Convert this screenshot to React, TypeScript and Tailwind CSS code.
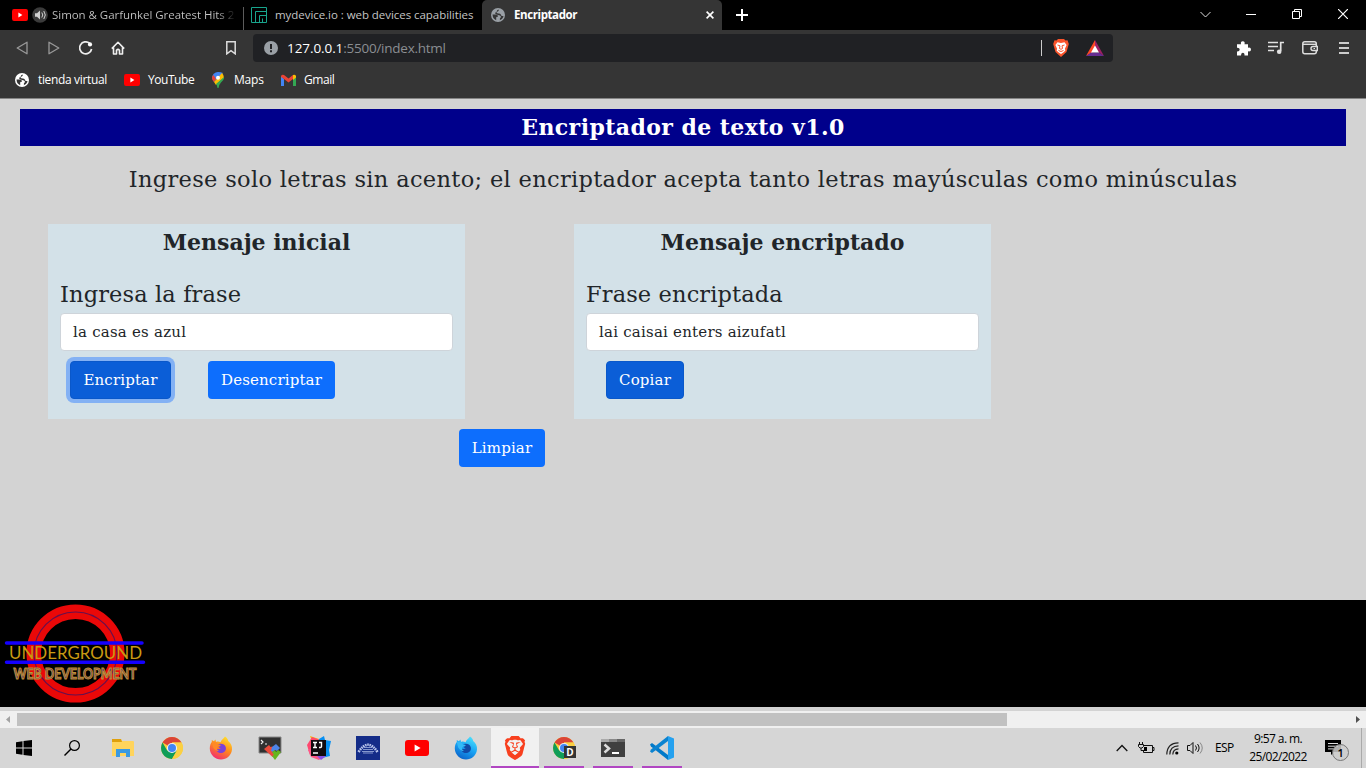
import React from "react";
import { SiBrave } from "react-icons/si";

const serif = "font-['DejaVu_Serif',serif]";

function Globe({ color, hole }: { color: string; hole: string }) {
  return (
    <svg width="14" height="14" viewBox="0 0 14 14" className="shrink-0">
      <circle cx="7" cy="7" r="7" fill={color} />
      <path d="M1.500 6.600h3.200q2.200 0 2.200 1.500v.7h-.8q-.9 0-.9.900v2.600Q1.800 11 1.500 6.600z" fill={hole} />
      <path d="M7.600 1.600q.6 1.500-.8 1.900-1.600.4-1.200 1.300.6.700 2.500.600 1.800.1 2 1.900.3 1 1.700.6.700-.1.700.8Q11.300 11.600 8.600 12.300q1-1.500.2-2.100l1-.6q.5-2.200-1.800-2.300L5.400 6.600Q3.600 5.600 4.400 4.400q1.800-.4 1.600-1.600.1-1 1.600-1.200z" fill={hole} />
    </svg>
  );
}

function YouTube({ w, h }: { w: number; h: number }) {
  return (
    <svg width={w} height={h} viewBox="0 0 24 16" preserveAspectRatio="none" className="shrink-0">
      <rect width="24" height="16" rx="3" fill="#f00" />
      <path d="M9.600 4.600v6.800l6-3.400z" fill="#fff" />
    </svg>
  );
}

function Chrome() {
  return (
    <svg width="22" height="22" viewBox="0 0 22 22">
      <circle cx="11" cy="11" r="11" fill="#f9cf3b" />
      <path d="M11 11 1.500 5.500A11 11 0 0 1 20.500 5.500H11z" fill="#db4437" />
      <path d="M1.500 5.500A11 11 0 0 0 11 22l4.800-8.300L11 11 6.300 13.800z" fill="#0f9d58" />
      <path d="M20.500 5.500H11L15.800 13.700 11 22A11 11 0 0 0 20.500 5.500z" fill="#fbd043" />
      <circle cx="11" cy="11" r="5.100" fill="#f1f1f1" />
      <circle cx="11" cy="11" r="4" fill="#4285f4" />
    </svg>
  );
}

function Firefox({ blue = false }: { blue?: boolean }) {
  const id = blue ? "fxblue" : "fxwarm";
  return (
    <svg width="24" height="24" viewBox="0 0 24 24">
      <defs>
        <linearGradient id={id} x1="0.8" y1="0" x2="0.3" y2="1">
          <stop offset="0" stopColor={blue ? "#4fe3fb" : "#ffe52e"} />
          <stop offset="0.5" stopColor={blue ? "#1aa5f5" : "#ff8a1c"} />
          <stop offset="1" stopColor={blue ? "#0a62c9" : "#f22a72"} />
        </linearGradient>
      </defs>
      <path d="M16 .5c2 1.200 3 3 3.200 4.600 2.600 2 4.200 5 3.800 8.400C22.400 19.500 17.700 23.500 12 23.500S1 19 .8 12.800c-.1-3 .8-5.200 2-6.800V4l2 1.300L6.500 3.500 7 6c1.500-.6 3-.5 4.500.2C12.500 3.500 14.500 3 16 .5z" fill={`url(#${id})`} />
      <path d="M8 9.500c2-2.600 7.500-2.200 8.700 1.500 1 3.500-1.500 6-4.700 6-3 0-5-2-4.700-4.800 1.500 1.200 3.400 1 4.500.1-1.500-.2-2.500-1.800-3.800-2.800z" fill={blue ? "#124aa6" : "#7c42d8"} />
      <path d="M2.800 6c3-1 5.200.3 6 2.300l3 .8c-.5 1.600-2.400 1.500-3.500 2.200-.8 2 .3 3.400 2 3.700-4 .2-6-2.600-6.500-5z" fill={blue ? "#33b9f7" : "#ff8a25"} />
    </svg>
  );
}

function Underground() {
  return (
    <svg width="150" height="107" viewBox="0 0 150 107">
      <circle cx="75.500" cy="53.500" r="41.800" fill="none" stroke="#ea0808" strokeWidth="14.500" />
      <circle cx="75.500" cy="53.500" r="41.500" fill="none" stroke="#641050" strokeWidth="1.200" />
      <path d="M6.500 43H142M6.500 62.300H143.500" stroke="#1400ff" strokeWidth="3.500" strokeLinecap="round" />
      <text x="9" y="59" textLength="133" lengthAdjust="spacingAndGlyphs" fontFamily="Lato, sans-serif" fontSize="17" fill="#c99a12">UNDERGROUND</text>
      <text x="13.500" y="78.500" textLength="123" lengthAdjust="spacingAndGlyphs" fontFamily="Lato, sans-serif" fontSize="14.500" fontWeight="700" fill="#68406a" stroke="#c39432" strokeWidth="1">WEB DEVELOPMENT</text>
    </svg>
  );
}

function Tabs() {
  return (
    <div className="flex h-[30px] bg-black text-[11.500px] text-[#c4c4c4]">
      <div className="flex w-[243px] items-center pl-3">
        <YouTube w={16} h={12} />
        <svg width="16" height="16" viewBox="0 0 16 16" className="ml-1 shrink-0">
          <circle cx="8" cy="8" r="7.800" fill="#3b3b3b" />
          <path d="M3 6.200h2L8 3.500v9L5 9.800H3z" fill="#d0d0d0" />
          <path d="M9.800 5.500q2 2.500 0 5M11.800 4q3 4 0 8" fill="none" stroke="#d0d0d0" />
        </svg>
        <span className="ml-1 w-[188px] whitespace-nowrap bg-gradient-to-r from-[#c4c4c4] from-88% to-black bg-clip-text text-transparent tracking-[-0.040px]">Simon &amp; Garfunkel Greatest Hits 2</span>
      </div>
      <div className="mt-[7px] w-px bg-[#5c5c5c]" />
      <div className="flex w-[238px] items-center pl-[7px]">
        <svg width="16" height="16" viewBox="0 0 16 16" className="shrink-0" fill="none" stroke="#18a58d">
          <path d="M.5.500h15v15H.5zM4.500 15.500v-11h11M8.500 15.500v-7h7M11.500 15.500v-4" />
        </svg>
        <span className="ml-2 whitespace-nowrap tracking-[-0.050px]">mydevice.io : web devices capabilities</span>
      </div>
      <div className="flex w-[240px] items-center rounded-t-[5px] bg-[#353535] pl-[9px] pr-2 text-white">
        <Globe color="#9aa0a6" hole="#353535" />
        <span className="ml-[9px] flex-1 font-bold tracking-[-0.400px]">Encriptador</span>
        <svg width="8" height="8" viewBox="0 0 8 8"><path d="m.6.600 6.800 6.800M7.400.600.600 7.400" stroke="#fff" strokeWidth="1.600" /></svg>
      </div>
      <div className="flex flex-1 items-center pl-[14px]">
        <svg width="12" height="12" viewBox="0 0 12 12"><path d="M6 0v12M0 6h12" stroke="#fff" strokeWidth="2" /></svg>
      </div>
      <div className="flex w-[184px] shrink-0 pb-[2px]">
        <div className="flex w-[46px] items-center justify-center"><svg width="11" height="11" viewBox="0 0 11 11"><path d="m.5 3 5 5 5-5" fill="none" stroke="#ddd" /></svg></div>
        <div className="flex w-[46px] items-center justify-center"><svg width="10" height="10" viewBox="0 0 10 10"><path d="M0 5.500h10" stroke="#fff" /></svg></div>
        <div className="flex w-[46px] items-center justify-center"><svg width="10" height="10" viewBox="0 0 10 10"><path d="M.5 2.500h7v7h-7zM2.500 2.500v-2h7v7h-2" fill="none" stroke="#fff" /></svg></div>
        <div className="flex w-[46px] items-center justify-center"><svg width="10" height="10" viewBox="0 0 10 10"><path d="m0 0 10 10M10 0 0 10" stroke="#fff" strokeWidth="1.200" /></svg></div>
      </div>
    </div>
  );
}

function Toolbar() {
  return (
    <div className="flex h-9 items-center bg-[#353535] pl-4">
      <svg width="12" height="14" viewBox="0 0 12 14"><path d="M11 1.200v11.600L1.200 7z" fill="none" stroke="#999" strokeWidth="1.300" strokeLinejoin="round" /></svg>
      <svg width="12" height="14" viewBox="0 0 12 14" className="ml-5"><path d="M1 1.200v11.600L10.800 7z" fill="none" stroke="#999" strokeWidth="1.300" strokeLinejoin="round" /></svg>
      <svg width="14" height="14" viewBox="0 0 14 14" className="ml-[19px]"><path d="M12.600 8A6 6 0 1 1 10.500 2.200" fill="none" stroke="#eee" strokeWidth="1.700" /><circle cx="11" cy="3.400" r="2.100" fill="#fff" /></svg>
      <svg width="14" height="14" viewBox="0 0 14 14" className="ml-[18px]"><path d="M.8 7.600 7 1.300l6.200 6.300M2.500 6.500V13H5.500V9.200q1.500-1.700 3 0V13h3V6.500" fill="none" stroke="#eee" strokeWidth="1.600" strokeLinejoin="round" /></svg>
      <svg width="10" height="14" viewBox="0 0 10 14" className="ml-[101px]"><path d="M.8.800h8.400v12L5 9.600.8 12.800z" fill="none" stroke="#ddd" strokeWidth="1.500" /></svg>
      <div className="ml-[17px] flex h-7 w-[860px] items-center rounded bg-[#202124] pl-[11px] pr-[9px]">
        <svg width="14" height="14" viewBox="0 0 14 14"><circle cx="7" cy="7" r="7" fill="#9aa0a6" /><path d="M7 3v5M7 9.300v1.900" stroke="#202124" strokeWidth="2" /></svg>
        <span className="ml-[9px] flex-1 text-[13.500px] tracking-[-0.250px] text-[#8b8e92]"><span className="tracking-[-0.080px] text-white">127.0.0.1</span>:5500/index.html</span>
        <div className="h-4 w-px bg-[#ccc]" />
        <svg width="16" height="18" viewBox="0 0 16 18" className="ml-[11px]">
          <path d="M5 0h6l1.500 1.500 2-.2L15.800 5 13.500 13 8 18 2.500 13 .2 5 1.500 1.300l2 .2z" fill="#fb542b" />
          <path d="M4.500 3.300 8 4l3.500-.7L13.600 6l-1.700 3.700 .5 1.700-1.500 1.500L8 15l-2.900-2.100-1.500-1.500.5-1.700L2.400 6z" fill="#fff" />
          <path d="m4.500 6 2.500.8L6.500 9.500 8 10.300l1.500-.8L9 6.800l2.500-.8M5.500 11.500 8 12.500l2.500-1" fill="none" stroke="#fb542b" strokeWidth="1" />
        </svg>
        <svg width="18" height="16" viewBox="0 0 18 16" className="ml-[17px]"><path d="M9 0 0 16 9 11z" fill="#ff4724" /><path d="m9 0 9 16-9-6z" fill="#9e1f63" /><path d="M0 16h18l-5-3.600H5z" fill="#662d91" /><path d="m9 5.500 4 7H5z" fill="#fff" /></svg>
      </div>
      <svg width="15" height="15" viewBox="0 0 15 15" className="ml-[123px]"><path d="M1 3.200h4q-.7-3 1.800-3t1.700 3h3.500v3.500q3-.6 3 1.800t-3 1.800V14.500H8.500q.2-2.700-1.700-2.700T5 14.500H1V10.500q2.700.1 2.700-1.900T1 6.800z" fill="#fff" /></svg>
      <svg width="16" height="14" viewBox="0 0 16 14" className="ml-[17px]"><path d="M0 1.500h10M0 5.500h10M0 9.500h6M12.700 10V1.500H16" fill="none" stroke="#e2e2e2" strokeWidth="1.700" /><circle cx="11.200" cy="10.800" r="2.300" fill="#e2e2e2" /></svg>
      <svg width="16" height="14" viewBox="0 0 16 14" className="ml-[18px]"><rect x=".8" y=".8" width="13.500" height="12" rx="2" fill="none" stroke="#ddd" strokeWidth="1.500" /><path d="M1 3.300h13.500" stroke="#ddd" strokeWidth="1.400" /><path d="M15.300 5.500H11q-2 0-2 2t2 2h4.300z" fill="#353535" stroke="#ddd" strokeWidth="1.400" /><path d="M11.500 7.500h1.500" stroke="#ddd" /></svg>
      <svg width="10" height="12" viewBox="0 0 10 12" className="ml-[21px]"><path d="M0 1h10M0 6h10M0 11h10" stroke="#ccc" strokeWidth="1.800" /></svg>
    </div>
  );
}

function Bookmarks() {
  return (
    <div className="flex h-8 items-center bg-[#353535] pl-[15px] pb-1 text-[12px] text-white">
      <Globe color="#fff" hole="#353535" />
      <span className="ml-[9px] w-[86px] whitespace-nowrap tracking-[-0.350px]">tienda virtual</span>
      <YouTube w={16} h={12} />
      <span className="ml-2 w-[64px] tracking-[-0.450px]">YouTube</span>
      <svg width="12" height="16" viewBox="0 0 12 16">
        <path d="M6 0A6 6 0 0 0 0 6l2 4 9-9Q9 0 6 0z" fill="#4285f4" /><path d="M0 6q0 2 2 4l2-3-2.500-4Q0 4 0 6z" fill="#ea4335" /><path d="M2 10 10 1q2 2 2 5L7 10 4 13z" fill="#fbbc04" /><path d="M12 5q.3 3-3 5.500-2 2-2.500 5.500h-1Q5 13 4 12z" fill="#34a853" /><circle cx="6" cy="5.700" r="2" fill="#fff" />
      </svg>
      <span className="ml-[10px] w-[47px] tracking-[-0.200px]">Maps</span>
      <svg width="15" height="12" viewBox="0 0 15 12"><path d="M0 2v10h3V5z" fill="#4285f4" /><path d="M15 2v10h-3V5z" fill="#34a853" /><path d="M0 2Q1 0 3 1l4.500 3.500L12 1v4L7.500 8.500 3 5 0 3z" fill="#ea4335" /><path d="M12 1q2-1 3 1v1.500L12 6z" fill="#fbbc04" /></svg>
      <span className="ml-2 tracking-[-0.450px]">Gmail</span>
    </div>
  );
}

function Card({ title, label, value, children }: { title: string; label: string; value: string; children: React.ReactNode }) {
  return (
    <section className="h-[195px] w-[417px] shrink-0 bg-[#d3e1e8] px-3 text-[#212529]">
      <h2 className="h-[37px] text-center text-[22px] leading-[36px] font-bold whitespace-nowrap">{title}</h2>
      <p className="mt-[15px] h-[37px] text-[22.500px] leading-9 tracking-[0.130px] whitespace-nowrap">{label}</p>
      <div className="flex h-[38px] items-center rounded border border-[#ced4da] bg-white px-3 text-[15px] tracking-[0.220px]">{value}</div>
      <div className="flex pt-[10px]">{children}</div>
    </section>
  );
}

const btn = "flex h-[38px] items-center justify-center rounded text-[15px] tracking-[0.150px] text-white";

function Page() {
  return (
    <main className={`h-[502px] border-t border-[#858585] bg-[#d3d3d3] pt-[10px] ${serif}`}>
      <h1 className="mx-5 h-[37px] bg-[#00008b] text-center text-[22px] leading-[36px] font-bold tracking-[0.420px] text-white">Encriptador de texto v1.0</h1>
      <p className="mt-[15px] text-center text-[22.500px] leading-9 tracking-[0.325px] whitespace-nowrap text-[#212529]">Ingrese solo letras sin acento; el encriptador acepta tanto letras mayúsculas como minúsculas</p>
      <div className="mt-[27px] flex gap-[109px] pl-12">
        <Card title="Mensaje inicial" label="Ingresa la frase" value="la casa es azul">
          <button className={`${btn} ml-[10px] w-[101px] border border-[#0a58ca] bg-[#0b5ed7] shadow-[0_0_0_4px_#83b1f4]`}>Encriptar</button>
          <button className={`${btn} ml-[37px] w-[127px] bg-[#0d6efd]`}>Desencriptar</button>
        </Card>
        <Card title="Mensaje encriptado" label="Frase encriptada" value="lai caisai enters aizufatl">
          <button className={`${btn} ml-5 w-[78px] border border-[#0a58ca] bg-[#0b5ed7]`}>Copiar</button>
        </Card>
      </div>
      <button className={`${btn} mt-[10px] ml-[459px] w-[86px] bg-[#0d6efd]`}>Limpiar</button>
    </main>
  );
}

function TaskItem({ children, active, open }: { children: React.ReactNode; active?: boolean; open?: boolean }) {
  return (
    <div className={active ? "flex h-10 w-12 flex-col items-center bg-[#f1f1f1]" : "flex h-10 w-12 flex-col items-center"}>
      <div className="flex h-[38px] items-center pt-[2px]">{children}</div>
      {active && <div className="h-[2px] w-12 bg-[#b146c2]" />}
      {open && <div className="h-[2px] w-10 bg-[#b146c2]" />}
    </div>
  );
}

function Taskbar() {
  return (
    <div className="flex h-10 bg-[#d6d6d6] text-black">
      <TaskItem><svg width="16" height="16" viewBox="0 0 16 16"><path d="M0 2.200 6.500 1.300V7.500H0zM7.500 1.100 16 0v7.500H7.500zM0 8.500h6.500v6.200L0 13.800zM7.500 8.500H16V16l-8.500-1.100z" /></svg></TaskItem>
      <TaskItem><svg width="16" height="16" viewBox="0 0 16 16"><circle cx="10.500" cy="5.500" r="4.900" fill="none" stroke="#000" strokeWidth="1.200" /><path d="m7 9-6.500 6.500" stroke="#000" strokeWidth="1.400" /></svg></TaskItem>
      <div className="ml-[3px] flex gap-px">
        <TaskItem><svg width="22" height="18" viewBox="0 0 22 18"><path d="M0 0h9l1 2h11q1 0 1 1v14H0z" fill="#ffd45c" /><path d="M0 0h9l1 3H0z" fill="#dfa00d" /><path d="M4 10h14v8h-4v-4H8v4H4z" fill="#3b9ae1" /></svg></TaskItem>
        <TaskItem><Chrome /></TaskItem>
        <TaskItem><Firefox /></TaskItem>
        <TaskItem><svg width="24" height="24" viewBox="0 0 24 24"><path d="M1 1h22v16H1z" fill="#303030" stroke="#888" /><path d="m3 4 2 2-2 2M7 8h2" fill="none" stroke="#eee" strokeWidth="1.200" /><path d="m6 13 5-4 1.500 2 2-.5 1.500 3-1.500 2.500 2 3-2 2z" fill="#ea4a3b" /><path d="m14 11 4-3 4 4-3 3-2-1-2 2-2-1z" fill="#4c84e8" /><path d="m14 16 3-2 1 2 2-2 3 2-6 8-3-4 2-1z" fill="#65b51d" /></svg></TaskItem>
        <TaskItem><svg width="24" height="24" viewBox="0 0 24 24"><path d="M3 0 12 3 8 12z" fill="#ffb000" /><path d="m5 1-5 8 3 10 10-15z" fill="#ff476f" /><path d="m12 3 5-3 1 4 6 1-2 9 1 6-8 2-8-5z" fill="#078ff2" /><path d="m1 14 7-4 9 10-5 4-8-3z" fill="#ff5686" /><path d="M10 20h9l-5 4z" fill="#8851e8" /><path d="M4 4h15v16H4z" fill="#120b10" /><path d="M6 6.500h4M8 6.500v5M6 11.500h4M12 6.500h2.500v4q0 1.200-2.500 1M6 17h5" fill="none" stroke="#fff" strokeWidth="1.400" /></svg></TaskItem>
        <TaskItem><svg width="24" height="24" viewBox="0 0 24 24"><path d="M0 0h24v24H0z" fill="#142c88" /><path d="M2.500 16Q12 1.500 21.500 16" fill="none" stroke="#b9c5ec" strokeWidth="2.600" strokeDasharray="1.600 .7" /><path d="M8 11.500h8M7 13.500h10M6 15.500h12M7 17h10" stroke="#a2b2df" strokeWidth=".8" /></svg></TaskItem>
        <TaskItem><YouTube w={24} h={16} /></TaskItem>
        <TaskItem><Firefox blue /></TaskItem>
        <TaskItem active><SiBrave size={24} color="#f8401f" /></TaskItem>
        <TaskItem open><div className="relative"><Chrome /><span className="absolute top-[9px] left-[11px] flex h-3 w-3 items-center justify-center bg-[#343434] text-[10px] leading-3 font-bold text-white">D</span></div></TaskItem>
        <TaskItem open><svg width="24" height="18" viewBox="0 0 24 18"><path d="M0 0h24v18H0z" fill="#404040" /><path d="M0 0h8v3H0z" fill="#aaa" /><path d="M8 0h8v3H8z" fill="#888" /><path d="M16 0h8v3h-8z" fill="#666" /><path d="m3.500 5.500 4.500 4-4.500 4" fill="none" stroke="#ddd" strokeWidth="2.500" /><path d="M11 14h7" stroke="#fff" strokeWidth="2" /></svg></TaskItem>
        <TaskItem open><svg width="24" height="24" viewBox="0 0 24 24"><path d="M0 8.500 2 7l16 12v5L1 10.500z" fill="#0079c9" /><path d="M0 15.500 2 17 18 5V0L1 13.500z" fill="#0b83d0" /><path d="m18 0 6 2.500v19L18 24z" fill="#25a1ef" /></svg></TaskItem>
      </div>
      <div className="flex-1" />
      <div className="flex items-center">
        <svg width="12" height="8" viewBox="0 0 12 8"><path d="m.7 7 5.300-5.500L11.300 7" fill="none" stroke="#111" strokeWidth="1.300" /></svg>
        <svg width="17" height="14" viewBox="0 0 17 14" className="ml-[10px]"><path d="M6 4.500h8.500v7h-9V9M15 6.500h1v3h-1M1.500 1v2M4.500 1v2M.5 3.500h5v2L4 7H2L.5 5.500zM3 7v2.500h2" fill="none" stroke="#111" /><path d="M6 6h3v4H6z" /></svg>
        <svg width="13" height="13" viewBox="0 0 13 13" className="ml-[11px]"><path d="M.8 12.500Q1 1 12.500.800M3.800 12.500Q4 4 12.500 3.800M6.800 12.500Q7 7 12.500 6.800" fill="none" stroke="#222" strokeWidth="1.200" /><circle cx="10.800" cy="11" r="1.600" /></svg>
        <svg width="17" height="14" viewBox="0 0 17 14" className="ml-[8px]"><path d="M.5 4.500h2.500L6 1.500v11l-3-3H.5zM8.500 4.500q2 2.500 0 5M10.500 3q3.200 4 0 8" fill="none" stroke="#111" /><path d="M13 1.500q4.500 5.500 0 11" fill="none" stroke="#888" /></svg>
        <span className="ml-[11px] w-[20px] text-[12px] tracking-[-0.650px]">ESP</span>
        <div className="ml-[13px] w-[60px] text-center text-[12px] leading-[18px] whitespace-nowrap tracking-[-0.600px]">9:57 a. m.<br />25/02/2022</div>
        <svg width="26" height="25" viewBox="0 0 26 25" className="ml-[17px]"><path d="M0 0h16v12H9l-3 3v-3H0z" transform="translate(0 4)" /><path d="M3 7.500h10M3 10.200h10M3 12.900h6" stroke="#ddd" /><circle cx="15.500" cy="16" r="8" fill="#ccc" fillOpacity=".85" stroke="#777" transform="translate(0 .5)" /><text x="12.500" y="20.500" fontFamily="Open Sans, sans-serif" fontSize="11" fontWeight="600">1</text></svg>
        <div className="ml-[10px] h-10 w-px bg-[#aaa]" />
        <div className="w-1" />
      </div>
    </div>
  );
}

export default function App() {
  return (
    <div className="h-[768px] w-[1366px] overflow-hidden bg-[#d3d3d3] font-['Open_Sans',sans-serif]">
      <Tabs />
      <Toolbar />
      <Bookmarks />
      <Page />
      <footer className="h-[107px] bg-black"><Underground /></footer>
      <div className="h-1 bg-[#d3d3d3]" />
      <div className="flex h-[17px] items-center bg-[#f0f0f0]">
        <svg width="17" height="17" viewBox="0 0 17 17"><path d="M10 5v7L6 8.500z" fill="#a3a3a3" /></svg>
        <div className="h-[13px] w-[990px] bg-[#c1c1c1]" />
        <div className="flex-1" />
        <svg width="17" height="17" viewBox="0 0 17 17"><path d="M7 5v7l4-3.500z" fill="#505050" /></svg>
      </div>
      <Taskbar />
    </div>
  );
}
